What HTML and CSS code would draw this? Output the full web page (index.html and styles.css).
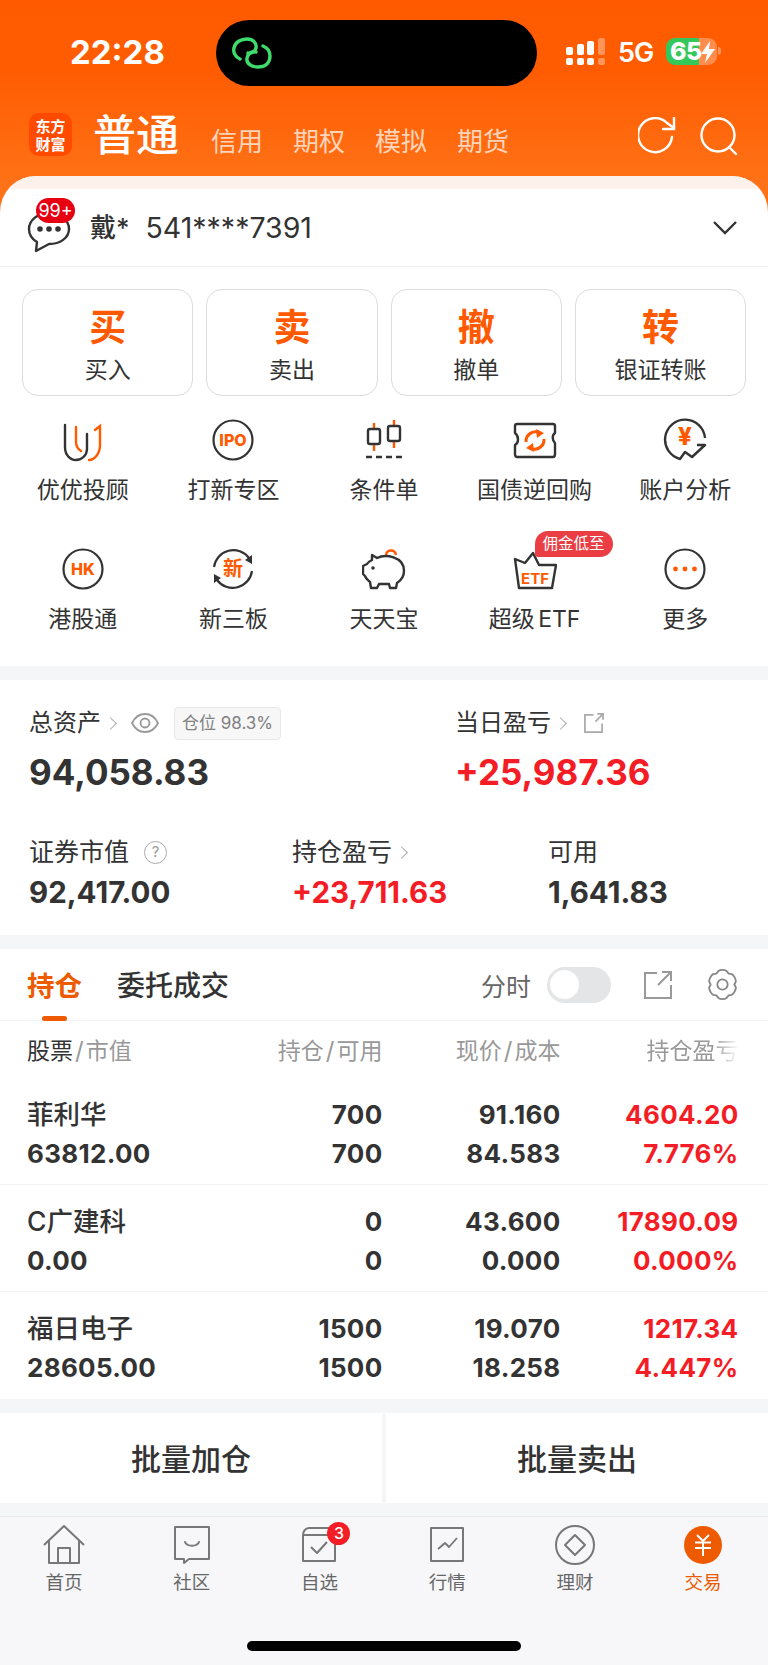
FILE: index.html
```html
<!DOCTYPE html>
<html lang="zh">
<head>
<meta charset="utf-8">
<title>交易</title>
<link rel="stylesheet" href="styles.css">
</head>
<body>
<div class="page">
  <div class="hero">
    <div class="status">
      <div class="time">22:28</div>
      <div class="island">
        <svg class="island-icon" viewBox="0 0 40 32" fill="none" stroke="#3ddc6b" stroke-width="3.4" stroke-linecap="round"><path d="M8 22C3 20 1 15 2 11C3 5 9 2 15 2C21 2 25 6 24 11C23 15 19 17 16 16"/><path d="M31 9C36 11 38 15 38 19C38 26 33 30 26 30C19 30 14 26 15 21C16 16 20 14 24 15"/></svg>
      </div>
      <div class="status-right">
        <svg class="signal" viewBox="0 0 40 27" fill="#fff"><rect x="0" y="9" width="7" height="8" rx="2"/><rect x="0" y="20" width="7" height="7" rx="2"/><rect x="11" y="6" width="7" height="11" rx="2"/><rect x="11" y="20" width="7" height="7" rx="2"/><rect x="21" y="3" width="7" height="14" rx="2"/><rect x="21" y="20" width="7" height="7" rx="2"/><rect x="32" y="0" width="7" height="17" rx="2" fill-opacity=".35"/><rect x="32" y="20" width="7" height="7" rx="2" fill-opacity=".35"/></svg>
        <span class="net">5G</span>
        <div class="battery"><span class="batt-num">65</span><svg class="bolt" viewBox="0 0 14 22" fill="#fff"><path d="M9 0L0 13H6L4 22L14 8H8Z"/></svg></div>
        <span class="batt-nub"></span>
      </div>
    </div>
    <div class="nav">
      <div class="logo"><span>东方</span><span>财富</span></div>
      <div class="nav-main">普通</div>
      <div class="nav-items"><span>信用</span><span>期权</span><span>模拟</span><span>期货</span></div>
      <div class="nav-icons">
        <svg class="nav-icon" viewBox="0 0 38 38" fill="none" stroke="#fff" stroke-width="2.4" stroke-linecap="round"><path d="M34 20A17 17 0 1 1 29 6L36 11"/><path d="M36 1V12H25"/></svg>
        <svg class="nav-icon" viewBox="0 0 38 38" fill="none" stroke="#fff" stroke-width="2.4" stroke-linecap="round"><circle cx="18" cy="18" r="16.5"/><path d="M29 30L36 37"/></svg>
      </div>
    </div>
    <div class="card-top">
      <div class="band"></div>
      <div class="account">
        <div class="chat">
          <svg class="chat-icon" viewBox="0 0 44 42" fill="none" stroke="#333" stroke-width="2.4" stroke-linejoin="round"><path d="M22 2C33 2 42 9 42 18C42 27 33 33 22 33L9 40L10 31C5 28 2 24 2 18C2 9 11 2 22 2Z"/><circle cx="13" cy="18" r="1.6" fill="#333"/><circle cx="22" cy="18" r="1.6" fill="#333"/><circle cx="31" cy="18" r="1.6" fill="#333"/></svg>
          <span class="chat-badge">99+</span>
        </div>
        <span class="acc-name">戴*</span>
        <span class="acc-no">541****7391</span>
        <svg class="chevron" viewBox="0 0 24 14" fill="none" stroke="#333" stroke-width="2.4"><path d="M1 1L12 12L23 1"/></svg>
      </div>
    </div>
  </div>

  <section class="panel">
    <div class="actions">
      <div class="action"><b>买</b><span>买入</span></div>
      <div class="action"><b>卖</b><span>卖出</span></div>
      <div class="action"><b>撤</b><span>撤单</span></div>
      <div class="action"><b>转</b><span>银证转账</span></div>
    </div>
    <div class="menu">
      <div class="menu-item">
        <svg class="mi" viewBox="0 0 44 44" fill="none" stroke-width="2.4" stroke-linecap="round"><path stroke="#333" d="M4 7V29C4 37 9 42 15 42C21 42 26 37 26 31V16"/><path stroke="#ff5a00" d="M15 9V24C15 28 17 31 20 33M34 12L39 8V27C39 35 34 42 28 42"/></svg>
        <span>优优投顾</span>
      </div>
      <div class="menu-item">
        <svg class="mi" viewBox="0 0 44 44" fill="none"><circle cx="22" cy="22" r="19.5" stroke="#333" stroke-width="2.2"/><text x="22" y="28" text-anchor="middle" class="icon-text">IPO</text></svg>
        <span>打新专区</span>
      </div>
      <div class="menu-item">
        <svg class="mi" viewBox="0 0 44 44" fill="none" stroke-width="2.4"><path stroke="#ff5a00" d="M12 5V33M32 2V30"/><rect x="6" y="11" width="12" height="15" rx="2" stroke="#333" fill="#fff"/><rect x="26" y="8" width="12" height="15" rx="2" stroke="#333" fill="#fff"/><path stroke="#333" stroke-dasharray="6 4" d="M4 39H41"/></svg>
        <span>条件单</span>
      </div>
      <div class="menu-item">
        <svg class="mi" viewBox="0 0 44 44" fill="none" stroke-width="2.4"><path stroke="#333" stroke-linejoin="round" d="M4 6H40C41 6 42 7 42 8V15C39 17 39 22 42 25V36C42 38 41 39 40 39H4C3 39 2 38 2 36V27C6 25 6 18 2 15V8C2 7 3 6 4 6Z"/><path stroke="#ff5a00" stroke-width="3" d="M13 24A9.5 9.5 0 0 1 27 15M31 21A9.5 9.5 0 0 1 17 30"/><path fill="#ff5a00" d="M23 11L31 15L24 20ZM21 34L13 30L20 25Z"/></svg>
        <span>国债逆回购</span>
      </div>
      <div class="menu-item">
        <svg class="mi" viewBox="0 0 44 44" fill="none" stroke-width="2.4" stroke-linejoin="round"><path stroke="#333" d="M42 20A20 20 0 1 0 17 41L22 34L29 39L42 27H34"/><text x="22" y="27" text-anchor="middle" class="icon-text yen">¥</text></svg>
        <span>账户分析</span>
      </div>
      <div class="menu-item">
        <svg class="mi" viewBox="0 0 44 44" fill="none"><circle cx="22" cy="22" r="19.5" stroke="#333" stroke-width="2.2"/><text x="22" y="28" text-anchor="middle" class="icon-text">HK</text></svg>
        <span>港股通</span>
      </div>
      <div class="menu-item">
        <svg class="mi" viewBox="0 0 44 44" fill="none" stroke="#333" stroke-width="2.2"><path d="M3 20A19.5 19.5 0 0 1 38 11M41 24A19.5 19.5 0 0 1 6 33"/><path fill="#333" stroke="none" d="M41 8L41 17L34 13ZM3 36L3 27L10 31Z"/><text x="22" y="29" text-anchor="middle" class="icon-text cn">新</text></svg>
        <span>新三板</span>
      </div>
      <div class="menu-item">
        <svg class="mi" viewBox="0 0 44 44" fill="none" stroke-width="2.4" stroke-linejoin="round"><path stroke="#ff5a00" d="M24 8C25 2 33 2 34 8"/><path stroke="#333" d="M10 8L15 11C23 7 42 9 42 24C42 30 38 34 35 36L34 41H28L27 37H17L15 41H9L8 35C6 33 4 32 3 29L1 27V19L5 17C6 15 8 14 10 13Z"/><circle cx="11" cy="21" r="1.8" fill="#333"/></svg>
        <span>天天宝</span>
      </div>
      <div class="menu-item">
        <div class="etf">
          <svg class="mi" viewBox="0 0 44 44" fill="none" stroke="#333" stroke-width="2.4" stroke-linejoin="round"><path d="M2 12L12 16L20 6L26 18H43L39 41H6Z"/><text x="22" y="37" text-anchor="middle" class="icon-text etf-text">ETF</text></svg>
          <span class="tag">佣金低至</span>
        </div>
        <span class="tight">超级 ETF</span>
      </div>
      <div class="menu-item">
        <svg class="mi" viewBox="0 0 44 44" fill="none"><circle cx="22" cy="22" r="19.5" stroke="#333" stroke-width="2.2"/><circle cx="12.500" cy="22" r="2.4" fill="#ff5a00"/><circle cx="22" cy="22" r="2.4" fill="#ff5a00"/><circle cx="31.500" cy="22" r="2.4" fill="#ff5a00"/></svg>
        <span>更多</span>
      </div>
    </div>
  </section>

  <section class="assets">
    <div class="stat-top">
      <div class="stat">
        <div class="label">总资产<i class="arrow"></i>
          <svg class="eye" viewBox="0 0 28 20" fill="none" stroke="#999" stroke-width="1.8"><path d="M1 10C4 4 9 1 14 1C19 1 24 4 27 10C24 16 19 19 14 19C9 19 4 16 1 10Z"/><circle cx="14" cy="10" r="4.500"/></svg>
          <span class="pos-box">仓位 98.3%</span>
        </div>
        <div class="big">94,058.83</div>
      </div>
      <div class="stat">
        <div class="label">当日盈亏<i class="arrow"></i>
          <svg class="share-small" viewBox="0 0 22 22" fill="none" stroke="#aaa" stroke-width="1.8"><path d="M11 2H2V20H20V11M13 9L21 1M15 1H21V7"/></svg>
        </div>
        <div class="big up">+25,987.36</div>
      </div>
    </div>
    <div class="stat-bottom">
      <div class="stat">
        <div class="label wide">证券市值<span class="qmark">?</span></div>
        <div class="mid">92,417.00</div>
      </div>
      <div class="stat">
        <div class="label wide">持仓盈亏<i class="arrow"></i></div>
        <div class="mid up">+23,711.63</div>
      </div>
      <div class="stat">
        <div class="label wide">可用</div>
        <div class="mid">1,641.83</div>
      </div>
    </div>
  </section>

  <section class="holdings">
    <div class="tabs">
      <div class="tab active">持仓</div>
      <div class="tab">委托成交</div>
      <div class="tools">
        <span class="fs">分时</span>
        <span class="toggle"><i></i></span>
        <svg class="tool-share" viewBox="0 0 28 28" fill="none" stroke="#999" stroke-width="2"><path d="M13 2H1V27H27V14M14 14L27 1M18 1H27V10"/></svg>
        <svg class="tool-gear" viewBox="0 0 32 32" fill="none" stroke="#888" stroke-width="1.8" stroke-linejoin="round"><path d="M12 3C14 1.500 18 1.500 20 3L22 5.500L25 6C27 7 29 11 29 13L27.500 16L29 19C29 21 27 25 25 26L22 26.500L20 29C18 30.500 14 30.500 12 29L10 26.500L7 26C5 25 3 21 3 19L4.500 16L3 13C3 11 5 7 7 6L10 5.500Z"/><circle cx="16" cy="16" r="5"/></svg>
      </div>
    </div>
    <div class="table-head">
      <div><span class="dark">股票</span><span class="slash">/</span>市值</div>
      <div class="r">持仓<span class="slash">/</span>可用</div>
      <div class="r">现价<span class="slash">/</span>成本</div>
      <div class="r"><span class="fade">持仓盈亏</span></div>
    </div>
    <div class="row">
      <div class="name">菲利华</div><div class="r">700</div><div class="r">91.160</div><div class="r up">4604.20</div>
      <div>63812.00</div><div class="r">700</div><div class="r">84.583</div><div class="r up">7.776%</div>
    </div>
    <div class="row">
      <div class="name">C广建科</div><div class="r">0</div><div class="r">43.600</div><div class="r up">17890.09</div>
      <div>0.00</div><div class="r">0</div><div class="r">0.000</div><div class="r up">0.000%</div>
    </div>
    <div class="row last">
      <div class="name">福日电子</div><div class="r">1500</div><div class="r">19.070</div><div class="r up">1217.34</div>
      <div>28605.00</div><div class="r">1500</div><div class="r">18.258</div><div class="r up">4.447%</div>
    </div>
  </section>

  <section class="batch">
    <div class="batch-btn">批量加仓</div>
    <div class="batch-btn">批量卖出</div>
  </section>

  <footer class="tabbar">
    <div class="tb-items">
      <div class="tb">
        <svg class="tb-icon" viewBox="0 0 44 40" fill="none" stroke="#777" stroke-width="2" stroke-linejoin="round"><path d="M2 20L22 1L42 20M7 16V38H37V16M16 38V23H28V38"/></svg>
        <span>首页</span>
      </div>
      <div class="tb">
        <svg class="tb-icon" viewBox="0 0 44 40" fill="none" stroke="#777" stroke-width="2" stroke-linejoin="round"><path d="M5 2H39V34H19L14 38V34H5Z" /><path d="M15 17C17 22 27 22 29 17" stroke-linecap="round"/></svg>
        <span>社区</span>
      </div>
      <div class="tb">
        <div class="tb-wrap">
          <svg class="tb-icon" viewBox="0 0 44 40" fill="none" stroke="#777" stroke-width="2" stroke-linejoin="round"><path d="M6 10C6 7 8 3 12 3H38V36H6ZM6 10H38M14 22L20 28L30 17"/></svg>
          <span class="tb-badge">3</span>
        </div>
        <span>自选</span>
      </div>
      <div class="tb">
        <svg class="tb-icon" viewBox="0 0 44 40" fill="none" stroke="#777" stroke-width="2" stroke-linejoin="round"><path d="M6 3H38V36H6Z"/><path d="M13 24L20 18L24 22L32 13" stroke-width="1.800"/></svg>
        <span>行情</span>
      </div>
      <div class="tb">
        <svg class="tb-icon" viewBox="0 0 44 40" fill="none" stroke="#777" stroke-width="2" stroke-linejoin="round"><circle cx="22" cy="20" r="19"/><path d="M22 10L32 20L22 30L12 20Z"/></svg>
        <span>理财</span>
      </div>
      <div class="tb active">
        <svg class="tb-icon" viewBox="0 0 44 40" fill="none"><circle cx="22" cy="20" r="19" fill="#ee5a00"/><path d="M16 10L22 16L28 10M14 17.500H30M14 23H30M22 16V31" stroke="#fff" stroke-width="2"/></svg>
        <span>交易</span>
      </div>
    </div>
    <div class="home-bar"></div>
  </footer>
</div>
</body>
</html>
```

FILE: styles.css
```css
* { box-sizing: border-box; }
html, body { margin: 0; padding: 0; }
body {
  width: 768px;
  height: 1665px;
  overflow: hidden;
  background: #f5f6f8;
  font-family: Inter, "Noto Sans CJK SC", sans-serif;
  color: #333;
}
.page { width: 768px; }

.hero {
  height: 267px;
  background: linear-gradient(180deg, #ff5a00 0, #ff5c02 70px, #ff7318 190px, #ff7318 267px);
}
.status { height: 105px; padding-top: 20px; display: flex; align-items: flex-start; position: relative; }
.time { width: 216px; height: 66px; padding-left: 70px; line-height: 65px; font-size: 33px; font-weight: 700; color: #fff; }
.island { width: 321px; height: 66px; background: #000; border-radius: 33px; padding: 17px 0 0 16px; }
.island-icon { width: 40px; height: 32px; display: block; }
.status-right { display: flex; align-items: flex-start; padding: 18px 0 0 29px; }
.signal { width: 40px; height: 27px; display: block; }
.net { margin-left: 12px; width: 36px; font-size: 27px; line-height: 27px; font-weight: 600; color: #fff; margin-top: 1px; letter-spacing: -1px; }
.battery {
  margin-left: 12px;
  width: 51px;
  height: 27px;
  border-radius: 9px;
  background: linear-gradient(90deg, #34c759 65%, rgba(255,255,255,.3) 65%);
  display: flex;
  align-items: center;
  padding-left: 4px;
}
.batt-num { font-size: 25px; line-height: 27px; font-weight: 800; color: #fff; letter-spacing: -.5px; }
.bolt { width: 14px; height: 22px; margin-left: -1px; }
.batt-nub { width: 3px; height: 8px; margin: 9px 0 0 1px; background: rgba(255,255,255,.35); border-radius: 0 3px 3px 0; }

.nav { height: 71px; display: flex; align-items: flex-start; padding: 8px 30px 0 29px; }
.logo {
  width: 43px; height: 43px; border-radius: 10px; background: #ff4a00;
  display: flex; flex-direction: column; align-items: center; justify-content: center;
  color: #fff; font-size: 15px; line-height: 18px; font-weight: 700;
  font-family: "Noto Sans CJK SC", sans-serif;
}
.logo span { display: block; }
.nav-main { margin-left: 21px; font-size: 43px; line-height: 38px; font-weight: 500; color: #fff; font-family: "Noto Sans CJK SC", sans-serif; }
.nav-items { display: flex; gap: 30px; margin-left: 32px; padding-top: 10px; color: rgba(255,255,255,.72); font-size: 26px; line-height: 34px; font-family: "Noto Sans CJK SC", sans-serif; }
.nav-icons { margin-left: auto; display: flex; gap: 24px; padding-top: 4px; }
.nav-icon { width: 38px; height: 38px; display: block; }

.card-top { height: 91px; border-radius: 36px 36px 0 0; overflow: hidden; background: #fff; }
.band { height: 13px; background: #fdf1ec; }
.account {
  height: 78px; display: flex; align-items: center; padding: 0 31px 0 27px;
  border-bottom: 1px solid #f1f2f4;
}
.chat { position: relative; width: 44px; height: 42px; margin-top: 8px; }
.chat-icon { width: 44px; height: 42px; display: block; }
.chat-badge {
  position: absolute; left: 9px; top: -13px; width: 39px; height: 25px; border-radius: 13px;
  background: #e60012; color: #fff; font-size: 18px; line-height: 25px; text-align: center; font-weight: 400;
}
.acc-name { margin-left: 19px; font-size: 26px; line-height: 42px; font-weight: 500; }
.acc-no { margin-left: 16px; font-size: 28.5px; line-height: 42px; font-weight: 400; }
.chevron { margin-left: auto; width: 24px; height: 14px; }

.panel { background: #fff; height: 399px; padding-top: 22px; }
.actions { display: grid; grid-template-columns: repeat(4, 171.25px); gap: 13px; padding: 0 22px; }
.action {
  height: 107px; border: 1px solid #dcdcdc; border-radius: 16px;
  display: flex; flex-direction: column; align-items: center;
  font-family: "Noto Sans CJK SC", sans-serif;
}
.action b { font-size: 37px; line-height: 42px; font-weight: 700; color: #ff5a00; margin-top: 14px; }
.action span { font-size: 23px; line-height: 30px; margin-top: 7px; color: #333; }

.menu { display: grid; grid-template-columns: repeat(5, 150.6px); row-gap: 41px; padding: 22px 0 0 7.5px; }
.menu-item { display: flex; flex-direction: column; align-items: center; height: 88px; }
.menu-item > span { margin-top: 12px; font-size: 23px; line-height: 32px; color: #333; white-space: nowrap; }
.menu-item > span.tight { word-spacing: -3px; }
.mi { width: 44px; height: 44px; display: block; }
.icon-text { fill: #ff5a00; font-family: Inter, sans-serif; font-weight: 800; font-size: 16px; }
.icon-text.yen { font-size: 24px; }
.icon-text.cn { font-family: "Noto Sans CJK SC", sans-serif; font-size: 20px; font-weight: 700; stroke: none; }
.icon-text.etf-text { font-size: 15px; stroke: none; font-weight: 700; }
.etf { position: relative; width: 44px; height: 44px; }
.tag {
  position: absolute; left: 22px; top: -16px; width: 78px; height: 26px;
  border-radius: 13px 13px 13px 3px; background: #ea3d44; color: #fff;
  font-size: 15.5px; line-height: 26px; text-align: center; white-space: nowrap;
}

.assets { margin-top: 14px; background: #fff; height: 255px; padding: 26px 0 0 29px; }
.stat-top { display: grid; grid-template-columns: 426px 1fr; }
.stat-bottom { display: grid; grid-template-columns: 263px 256px 1fr; margin-top: 41px; }
.label { height: 34px; display: flex; align-items: center; font-size: 24px; line-height: 34px; color: #333; }
.label.wide { font-size: 25px; }
.arrow { width: 9px; height: 9px; border-top: 1.5px solid #aaa; border-right: 1.5px solid #aaa; transform: rotate(45deg); margin-left: 5px; }
.eye { width: 28px; height: 20px; margin-left: 16px; }
.pos-box {
  margin-left: 15px; width: 107px; height: 33px; border: 1px solid #e8e8e8; border-radius: 4px;
  background: #f7f7f8; color: #808080; font-size: 17px; line-height: 31px; text-align: center; white-space: nowrap;
}
.share-small { width: 21px; height: 21px; margin-left: 18px; }
.qmark {
  margin-left: 15px; width: 23px; height: 23px; border-radius: 50%; border: 1.5px solid #aaa;
  color: #999; font-size: 15px; line-height: 20px; text-align: center;
}
.big { margin-top: 10px; font-size: 35px; line-height: 44px; font-weight: 700; color: #333; white-space: nowrap; }
.mid { margin-top: 5px; font-size: 29.5px; line-height: 36px; font-weight: 700; color: #333; white-space: nowrap; }
.big.up, .mid.up { color: #f41d25; }

.holdings { margin-top: 14px; background: #fff; height: 450px; }
.tabs { height: 72px; display: flex; align-items: center; padding: 0 29px 0 27px; border-bottom: 1px solid #f3f3f5; }
.tab { font-size: 28px; line-height: 74px; height: 72px; color: #333; font-weight: 500; position: relative; margin-right: 35px; }
.tab.active { color: #ee5a00; font-weight: 700; font-size: 27.5px; }
.tab.active::after { content: ""; position: absolute; left: 15px; bottom: 0; width: 25px; height: 5px; border-radius: 3px; background: #ee5a00; }
.tools { margin-left: auto; display: flex; align-items: center; }
.fs { font-size: 25px; color: #666; }
.toggle { margin-left: 16px; width: 64px; height: 36px; border-radius: 18px; background: #e4e5e7; padding: 3px; display: block; }
.toggle i { display: block; width: 29px; height: 29px; border-radius: 50%; background: #fff; }
.tool-share { width: 28px; height: 28px; margin-left: 33px; }
.tool-gear { width: 33px; height: 33px; margin-left: 34px; }

.table-head, .row { display: grid; grid-template-columns: 177.5px 178px 178px 178px; padding-left: 27px; }
.table-head { height: 57px; align-items: center; font-size: 23px; color: #999; white-space: nowrap; padding-bottom: 2px; }
.slash { padding: 0 2px; font-size: 24px; }
.dark { color: #333; }
.r { text-align: right; }
.fade { display: inline-block; -webkit-mask-image: linear-gradient(90deg, #000 72%, transparent 100%); mask-image: linear-gradient(90deg, #000 72%, transparent 100%); }
.row { height: 107px; grid-auto-rows: 39px; align-content: center; padding-top: 5px; font-size: 26px; letter-spacing: .3px; font-weight: 700; color: #333; line-height: 39px; border-bottom: 1px solid #f3f3f5; white-space: nowrap; }
.row.last { border-bottom: 0; }
.row .up { color: #f41d25; }
.row .name { font-size: 26.5px; font-weight: 500; letter-spacing: 0; }

.batch { margin-top: 14px; display: grid; grid-template-columns: 382px 382px; gap: 4px; }
.batch-btn { height: 90px; background: #fff; text-align: center; font-size: 30px; line-height: 93px; font-weight: 500; color: #333; }

.tabbar { margin-top: 13px; height: 149px; background: #f7f7fa; border-top: 1px solid #e9e9eb; position: relative; }
.tb-items { display: grid; grid-template-columns: repeat(6, 127.8px); padding: 8px 0 0 0; }
.tb { display: flex; flex-direction: column; align-items: center; font-size: 18.5px; line-height: 28px; color: #666; }
.tb.active { color: #ee5a00; }
.tb-icon { width: 44px; height: 40px; display: block; margin-bottom: 3px; }
.tb-wrap { position: relative; }
.tb-badge {
  position: absolute; left: 30px; top: -3px; width: 23px; height: 23px; border-radius: 50%;
  background: #f41d25; color: #fff; font-size: 16px; line-height: 23px; text-align: center; font-weight: 500;
}
.home-bar { position: absolute; left: 247px; top: 124px; width: 274px; height: 10px; border-radius: 5px; background: #000; }
```
